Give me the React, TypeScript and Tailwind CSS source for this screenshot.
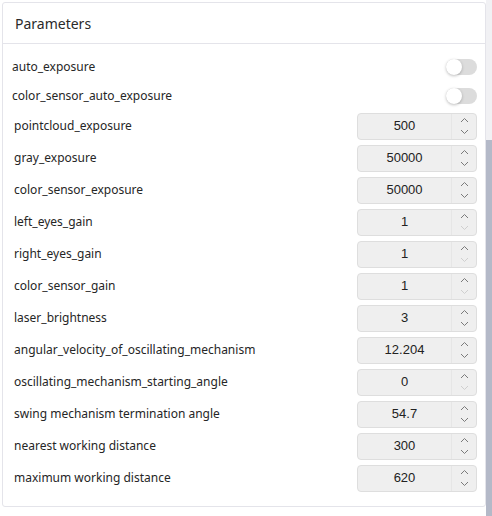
import React from 'react';

type Param =
    | { key: string; kind: 'switch'; value: boolean }
    | { key: string; kind: 'number'; value: string; atMin?: boolean };

const params: Param[] = [
    { key: 'auto_exposure', kind: 'switch', value: false },
    { key: 'color_sensor_auto_exposure', kind: 'switch', value: false },
    { key: 'pointcloud_exposure', kind: 'number', value: '500' },
    { key: 'gray_exposure', kind: 'number', value: '50000' },
    { key: 'color_sensor_exposure', kind: 'number', value: '50000' },
    { key: 'left_eyes_gain', kind: 'number', value: '1', atMin: true },
    { key: 'right_eyes_gain', kind: 'number', value: '1', atMin: true },
    { key: 'color_sensor_gain', kind: 'number', value: '1', atMin: true },
    { key: 'laser_brightness', kind: 'number', value: '3' },
    { key: 'angular_velocity_of_oscillating_mechanism', kind: 'number', value: '12.204' },
    { key: 'oscillating_mechanism_starting_angle', kind: 'number', value: '0', atMin: true },
    { key: 'swing mechanism termination angle', kind: 'number', value: '54.7' },
    { key: 'nearest working distance', kind: 'number', value: '300' },
    { key: 'maximum working distance', kind: 'number', value: '620' },
];

const Chevron: React.FC<{ up?: boolean; faded?: boolean }> = ({ up, faded }) => (
    <svg width="9" height="6" viewBox="0 0 9 6" className={faded ? 'text-[#cfcfcf]' : 'text-[#7a7a7a]'}>
        <path
            d={up ? 'M1 5 L4.5 1.5 L8 5' : 'M1 1 L4.5 4.5 L8 1'}
            fill="none"
            stroke="currentColor"
            strokeWidth="1"
        />
    </svg>
);

const Toggle: React.FC<{ on: boolean }> = ({ on }) => (
    <div className={`relative w-[31px] h-[16px] rounded-full ${on ? 'bg-[#3b82f6]' : 'bg-[#dcdcdc]'}`}>
        <div className="absolute left-0 top-0 w-[16px] h-[16px] rounded-full bg-white shadow-[0_1px_3px_rgba(0,0,0,0.25)]" />
    </div>
);

const NumberBox: React.FC<{ value: string; atMin?: boolean }> = ({ value, atMin }) => (
    <div className="flex w-[120px] h-[27px] rounded-[4px] border border-[#dedede] bg-[#efefef]">
        <div className="flex-1 flex items-center justify-center text-[13px] text-[#222] font-['Liberation_Sans',Arial,sans-serif]">
            {value}
        </div>
        <div className="w-[25px] flex flex-col items-center justify-center gap-[6px] border-l border-[#e6e6e6]">
            <Chevron up />
            <Chevron faded={atMin} />
        </div>
    </div>
);

export default function App() {
    return (
        <div className="flex w-[492px] h-[516px] bg-white font-['Noto_Sans','Open_Sans',sans-serif]">
            <div className="flex-1 pl-[2px] pt-[2px]">
                <div className="h-[505px] border border-[#e4e4ea] rounded-[3px]">
                    {/* Header */}
                    <div className="h-[41px] flex items-center pl-[12px] border-b border-[#e4e4ea] text-[14px] text-[#2a2a2a]">
                        Parameters
                    </div>

                    {/* Parameter rows */}
                    <div className="pt-[8px] pl-[9px] pr-[8px]">
                        {params.map((p) =>
                            p.kind === 'switch' ? (
                                <div key={p.key} className="h-[29px] flex items-center justify-between">
                                    <span className="text-[12px] text-[#262626]">{p.key}</span>
                                    <Toggle on={p.value} />
                                </div>
                            ) : (
                                <div key={p.key} className="h-[32px] flex items-center justify-between">
                                    <span className="pl-[2px] text-[12px] text-[#262626]">{p.key}</span>
                                    <NumberBox value={p.value} atMin={p.atMin} />
                                </div>
                            )
                        )}
                    </div>
                </div>
            </div>

            {/* Scrollbar */}
            <div className="w-[6px] flex flex-col bg-[#f1f1f4]">
                <div className="mt-[140px] flex-1 bg-[#b4b9c8]" />
            </div>
        </div>
    );
}
